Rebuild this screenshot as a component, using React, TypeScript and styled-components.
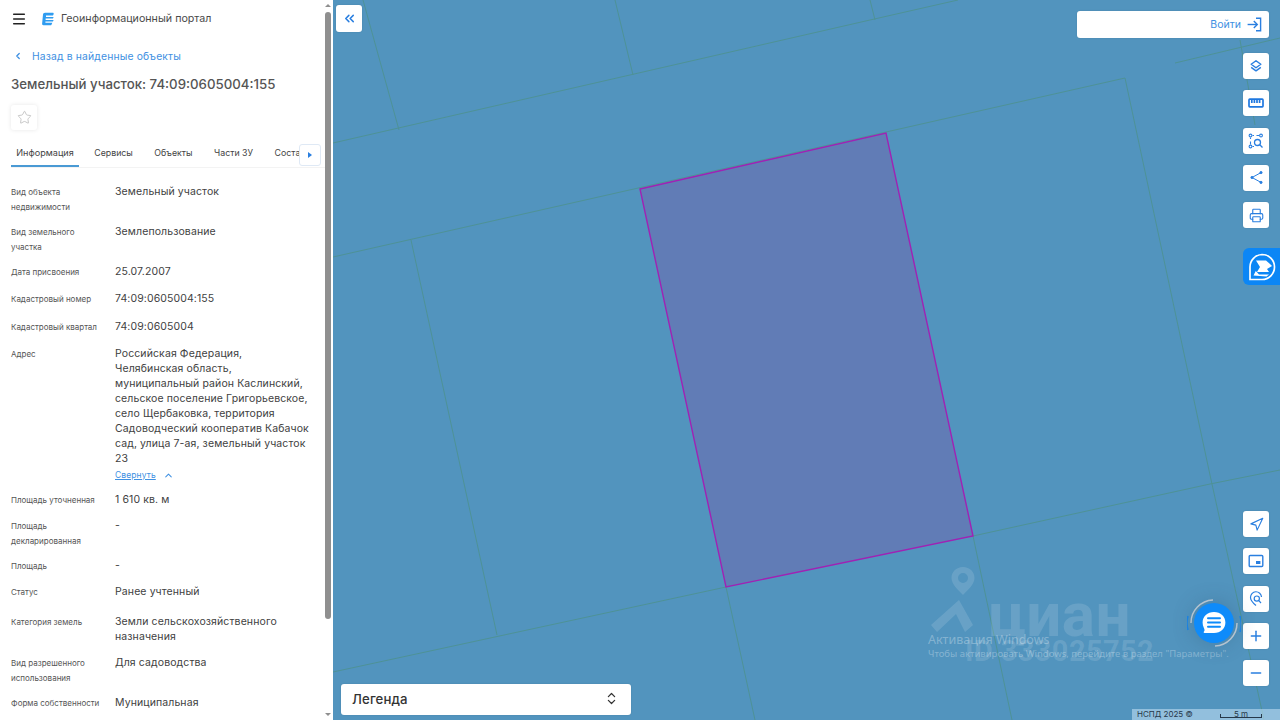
import React from "react";
import styled, { createGlobalStyle } from "styled-components";
import { Printer, Navigation, ChevronsLeft, Plus, Minus, Star, ChevronLeft, ChevronUp, ChevronsUpDown, Menu } from "lucide-react";

const Global = createGlobalStyle`
  html, body { margin: 0; padding: 0; width: 1280px; height: 720px; overflow: hidden; }
  body { font-family: Inter, "Noto Sans", sans-serif; background: #5294be; }
  #root { width: 1280px; height: 720px; }
`;

const Page = styled.div`display: flex; width: 1280px; height: 720px; overflow: hidden;`;
const Panel = styled.aside`position: relative; flex: 0 0 333px; height: 720px; background: #fff; overflow: hidden; color: #3c3c3c;`;
const Header = styled.header`display: flex; align-items: center; height: 37px; padding-left: 11px;`;
const Burger = styled.span`display: flex; width: 16px; color: #222; margin-right: 15px;`;
const BrandName = styled.span`font-size: 10.7px; color: #4a4a4a; margin-left: 7px;`;
const BackLink = styled.div`display: flex; align-items: center; gap: 9px; height: 16px; margin: 11px 0 0 13px; color: #3e90e2; font-size: 10.35px; letter-spacing: 0.015em;`;
const Title = styled.h1`margin: 11px 0 0 11px; font-size: 13.25px; line-height: 18px; font-weight: 500; color: #555;`;
const StarButton = styled.div`display: flex; align-items: center; justify-content: center; width: 26px; height: 25px; margin: 12px 0 0 11px; border-radius: 3px; box-shadow: 0 0 4px rgba(0,0,0,.1); color: #b5b5b5;`;
const Tabs = styled.nav`display: flex; width: 314px; height: 27px; margin: 10px 0 0 11px; overflow: hidden; border-bottom: 1px solid #f3f3f3; box-sizing: content-box;`;
const Tab = styled.div<{ $active?: boolean; $first?: boolean }>`
  flex: none; padding: 0 ${p => (p.$active ? "5.25px" : "10.75px")}; font-size: ${p => (p.$active ? "9.1px" : "8.8px")}; line-height: 25px; color: #444;
  border-bottom: 2px solid ${p => (p.$active ? "#4a9ad4" : "transparent")};
  height: 27px; box-sizing: border-box; margin-left: ${p => (p.$first ? "4.5px" : "0")};
`;
const TabArrow = styled.div`position: absolute; left: 299px; top: 144px; width: 22px; height: 22px; background: #fff; border: 1px solid #dfe9f5; border-radius: 3px; box-sizing: border-box; display: flex; align-items: center; justify-content: center;`;
const Rows = styled.div`margin: 16.5px 0 0 11px; width: 300px;`;
const Row = styled.div<{ $after?: number }>`display: grid; grid-template-columns: 104px 1fr; margin-bottom: ${p => p.$after ?? 10}px; min-height: 17.5px;`;
const Label = styled.div`font-size: 8px; line-height: 15px; color: #555; max-width: 92px;`;
const Value = styled.div`font-size: 10.5px; line-height: 15px; color: #414141; letter-spacing: 0.01em; margin-top: -1px;`;
const Collapse = styled.div`display: flex; align-items: center; gap: 7px; height: 16px; margin-top: 1px; font-size: 8.5px; color: #3e90e2;`;
const CollapseText = styled.span`text-decoration: underline;`;
const ScrollThumb = styled.div`position: absolute; left: 325px; top: 12px; width: 6px; height: 607px; background: #8f8f8f; border-radius: 3px;`;
const ScrollArrow = styled.div<{ $down?: boolean }>`
  position: absolute; left: 325px; ${p => (p.$down ? "bottom: 4px;" : "top: 4px;")} width: 0; height: 0;
  border-left: 3px solid transparent; border-right: 3px solid transparent;
  ${p => (p.$down ? "border-top: 3px solid #8f8f8f;" : "border-bottom: 3px solid #8f8f8f;")}
`;
const MapArea = styled.main`position: relative; flex: 1; height: 720px; background: #5294be; overflow: hidden;`;
const MapDrawing = styled.svg`position: absolute; left: 0; top: 0;`;
const Card = styled.div`background: #fff; border-radius: 3px; display: flex; align-items: center; box-shadow: 0 0 2px rgba(0,0,0,.12);`;
const CollapseButton = styled(Card)`position: absolute; left: 3px; top: 5px; width: 26px; height: 27px; justify-content: center; color: #2a7fe0;`;
const Login = styled(Card)`position: absolute; right: 11px; top: 11px; width: 192px; height: 27px; justify-content: flex-end; gap: 6px; padding: 0 7px 1px 0; box-sizing: border-box; color: #3e90e2; font-size: 10.5px;`;
const ToolColumn = styled.div`position: absolute; right: 11px; display: flex; flex-direction: column; gap: 11.25px;`;
const TopTools = styled(ToolColumn)`top: 53px;`;
const BottomTools = styled(ToolColumn)`top: 511px;`;
const Tool = styled(Card)`width: 26px; height: 26px; justify-content: center; color: #2a7fe0;`;
const Badge = styled.div`position: absolute; right: 0; top: 248px; width: 37px; height: 37px; background: #0c86f5; border-radius: 6px 0 0 6px; display: flex; align-items: center; justify-content: center;`;
const Chat = styled.div`position: absolute; left: 854px; top: 596px; width: 54px; height: 54px;`;
const ChatRing = styled.svg`position: absolute; left: 0; top: 0;`;
const ChatCore = styled.div`position: absolute; left: 7px; top: 7px; width: 40px; height: 40px; border-radius: 50%; background: #0e8bfa; box-shadow: 0 0 22px rgba(40,70,100,.3); display: flex; align-items: center; justify-content: center;`;
const Legend = styled(Card)`position: absolute; left: 8px; top: 684px; width: 290px; height: 31px; justify-content: space-between; padding: 0 12px 2px 11px; box-sizing: border-box; font-size: 13.2px; font-weight: 500; color: #333; letter-spacing: .01em;`;
const Attribution = styled.div`position: absolute; right: 0; bottom: 0; width: 148px; height: 11px; background: rgba(190,220,242,.6); font-size: 8px; line-height: 11px; color: #26384a; display: flex; padding-left: 5px; box-sizing: border-box;`;
const ScaleLabel = styled.div`position: absolute; left: 88px; top: 0; width: 42px; height: 8px; text-align: center; border-bottom: 1px solid #26384a; line-height: 10px; &::before, &::after { content: ""; position: absolute; bottom: 0; width: 1px; height: 3px; background: #26384a; } &::before { left: 0; } &::after { right: 0; }`;
const Watermark = styled.div`position: absolute; left: 595px; top: 565px; color: rgba(255,255,255,.13); pointer-events: none;`;
const WatermarkMark = styled.svg`display: block;`;
const CianWord = styled.div`position: absolute; left: 60px; top: 15px; font: 700 62px/70px Roboto, sans-serif; letter-spacing: .5px;`;
const CianId = styled.div`position: absolute; left: 37px; top: 68px; font: 700 29px/36px Roboto, sans-serif; white-space: nowrap; letter-spacing: .4px;`;
const Activation = styled.div`position: absolute; left: 595px; top: 632px; color: rgba(255,255,255,.3); white-space: nowrap; font-family: "Noto Sans", sans-serif;`;
const ActivationTitle = styled.div`font-size: 12.5px; line-height: 15px;`;
const ActivationHint = styled.div`font-size: 9.5px; line-height: 14px;`;

const Logo = () => (
  <svg width="12" height="14" viewBox="0 0 12 14">
    <path d="M3 .8 H10.5 C11.6 .8 12 1.5 11.6 2.3 L11 3.4 H4 V5 H11.6 L11 6.6 H3.6 V8 H11.6 L11 9.5 H3.4 V10.8 H10.3 L9.6 12.4 C9.3 13 9 13.2 8.4 13.2 H1.4 C.5 13.2 0 12.6 .1 11.8 L1 2.6 C1.1 1.6 1.9 .8 3 .8Z" fill="#2f9cf0" />
  </svg>
);
const LoginIcon = () => (
  <svg width="15" height="15" viewBox="0 0 15 15" fill="none" stroke="#2a7fe0" strokeWidth="1.4">
    <path d="M9 1.2 H13.6 V13.8 H9" /><path d="M.6 7.5 H10" /><path d="M6.8 4 L10.3 7.5 L6.8 11" />
  </svg>
);
const LayersIcon = () => (
  <svg width="14" height="14" viewBox="0 0 16 16" fill="none" stroke="#2a7fe0" strokeWidth="1.7" strokeLinejoin="round">
    <path d="M8 2 L13.5 6 L8 10 L2.5 6 Z" /><path d="M2.5 9.5 L8 13.5 L13.5 9.5" />
  </svg>
);
const RulerIcon = () => (
  <svg width="16" height="16" viewBox="0 0 16 16" fill="none" stroke="#1f78e0" strokeWidth="1.7">
    <rect x="1" y="4.2" width="14" height="7.6" rx=".8" /><path d="M3.8 4.5 V8 M6.4 4.5 V8 M9 4.5 V8 M11.6 4.5 V8" />
  </svg>
);
const AreaSearchIcon = () => (
  <svg width="16" height="16" viewBox="0 0 16 16" fill="none" stroke="#2a7fe0" strokeWidth="1.1">
    <circle cx="2.5" cy="2.5" r="1.4" /><circle cx="13" cy="2.5" r="1.4" /><circle cx="2.5" cy="13.5" r="1.4" />
    <path d="M4.5 2.5 H6 M8.5 2.5 H11 M2.5 4.5 V6 M2.5 8.5 V11.5 M4.5 13.5 H6" />
    <circle cx="9.5" cy="9.5" r="3" strokeWidth="1.3" /><path d="M11.8 11.8 L14.5 14.5" strokeWidth="1.3" />
  </svg>
);
const ShareIcon = () => (
  <svg width="15" height="15" viewBox="0 0 15 15" fill="#2a7fe0" stroke="#2a7fe0" strokeWidth="1">
    <circle cx="12" cy="2.6" r="1.1" /><circle cx="3" cy="7.5" r="1.1" /><circle cx="12" cy="12.4" r="1.1" />
    <path d="M3 7.5 L12 2.6 M3 7.5 L12 12.4" fill="none" />
  </svg>
);
const ViewIcon = () => (
  <svg width="16" height="16" viewBox="0 0 16 16" fill="none" stroke="#2a7fe0" strokeWidth="1.4">
    <rect x="1.2" y="2.5" width="13.6" height="11" rx="1" /><rect x="8" y="8" width="4.4" height="3" fill="#2a7fe0" stroke="none" />
  </svg>
);
const GeoSearchIcon = () => (
  <svg width="14" height="16" viewBox="0 0 14 16" fill="none" stroke="#2a7fe0" strokeWidth="1.2">
    <path d="M7 14.5 C4 12 1.5 9.5 1.5 6.5 A5.5 5.5 0 0 1 12.5 6" /><circle cx="7.8" cy="7.6" r="2.6" /><path d="M9.8 9.6 L12 12" />
  </svg>
);
const BadgeIcon = () => (
  <svg width="28" height="28" viewBox="0 0 28 28" fill="none">
    <path d="M14 1.5 A12.5 12.5 0 1 1 14 26.5 H2 V14 A12.5 12.5 0 0 1 14 1.5 Z" stroke="#fff" strokeWidth="1.7" />
    <path d="M8 7.5 L18 7.5 L22 11 L24 13 L19 16 L21 19 L9 19 L12 14 L8 7.5 Z" fill="#fff" />
    <path d="M5.5 22.5 L7.8 18 L11 21.5 H21 L18.5 23.5 Z" fill="#fff" />
  </svg>
);
const ChatIcon = () => (
  <svg width="24" height="24" viewBox="0 0 24 24">
    <path d="M12 1 C18.6 1 23.4 5.4 23.4 11.5 C23.4 17.6 18.6 22 12 22 H2.5 C1.6 22 1.4 21.2 2 20.6 C3 19.6 2.4 18.2 1.8 16.8 C1 15.2 .6 13.5 .6 11.5 C.6 5.4 5.4 1 12 1 Z" fill="#fff" />
    <path d="M6 7.2 H18 M6 11.5 H18 M6 15.8 H18" stroke="#0e8bfa" strokeWidth="2" strokeLinecap="round" />
  </svg>
);

const lines = [
  "0,143 537,20 625,0", "0,257 792,78 877,475 931,720", "640,536 877,484 947,470", "0,672 393,587 422,720", "640,536 679,720",
  "78,240 164,635", "282,0 300,75", "537,0 542,20", "30,0 66,130", "842,63 947,38", "907,40 922,125",
];

const details: [string, React.ReactNode, number?][] = [
  ["Вид объекта недвижимости", "Земельный участок"],
  ["Вид земельного участка", "Землепользование"],
  ["Дата присвоения", "25.07.2007"],
  ["Кадастровый номер", "74:09:0605004:155"],
  ["Кадастровый квартал", "74:09:0605004"],
];
const detailsAfter: [string, React.ReactNode, number?][] = [
  ["Площадь уточненная", "1 610 кв. м", 8.5],
  ["Площадь декларированная", "-"],
  ["Площадь", "-", 8],
  ["Статус", "Ранее учтенный", 12.5],
  ["Категория земель", "Земли сельскохозяйственного назначения", 12],
  ["Вид разрешенного использования", "Для садоводства"],
  ["Форма собственности", "Муниципальная"],
];
const address = [
  "Российская Федерация,", "Челябинская область,", "муниципальный район Каслинский,", "сельское поселение Григорьевское,",
  "село Щербаковка, территория", "Садоводческий кооператив Кабачок", "сад, улица 7-ая, земельный участок", "23",
];

export default function App() {
  const renderRow = ([l, v, after]: [string, React.ReactNode, number?]) => (
    <Row key={l} $after={after}><Label>{l}</Label><Value>{v}</Value></Row>
  );
  return (
    <Page>
      <Global />
      <Panel>
        <Header>
          <Burger><Menu size={16} strokeWidth={2.2} /></Burger>
          <Logo />
          <BrandName>Геоинформационный портал</BrandName>
        </Header>
        <BackLink><ChevronLeft size={10} strokeWidth={3} />Назад в найденные объекты</BackLink>
        <Title>Земельный участок: 74:09:0605004:155</Title>
        <StarButton><Star size={15} strokeWidth={1.2} /></StarButton>
        <Tabs>
          <Tab $active>Информация</Tab>
          <Tab $first>Сервисы</Tab>
          <Tab>Объекты</Tab>
          <Tab>Части ЗУ</Tab>
          <Tab>Состав</Tab>
          <Tab>Права</Tab>
        </Tabs>
        <TabArrow><svg width="4" height="6" viewBox="0 0 4 6"><path d="M0 0 L4 3 L0 6 Z" fill="#2a7fe0" /></svg></TabArrow>
        <Rows>
          {details.map(renderRow)}
          <Row $after={10}>
            <Label>Адрес</Label>
            <Value>
              {address.map(line => <div key={line}>{line}</div>)}
              <Collapse><CollapseText>Свернуть</CollapseText><ChevronUp size={11} strokeWidth={2.2} /></Collapse>
            </Value>
          </Row>
          {detailsAfter.map(renderRow)}
        </Rows>
        <ScrollArrow />
        <ScrollThumb />
        <ScrollArrow $down />
      </Panel>
      <MapArea>
        <MapDrawing width="947" height="720" viewBox="0 0 947 720" fill="none">
          {lines.map(p => <polyline key={p} points={p} stroke="#4e9296" strokeWidth="1" />)}
          <polygon points="307,189 553,133 640,536 393,587" fill="#617cb6" stroke="#a022b4" strokeWidth="1.4" />
        </MapDrawing>
        <Watermark>
          <WatermarkMark width="60" height="70" viewBox="0 0 60 70" fill="currentColor">
            <path fillRule="evenodd" d="M35 2 C42 2 46.5 7 46.5 13 C46.5 19 40 25 35 30 C30 25 23.5 19 23.5 13 C23.5 7 28 2 35 2 Z M35 8 A5 5 0 1 0 35 18 A5 5 0 1 0 35 8 Z" />
            <path d="M3 60 L31 35 L45 60 L37 67 L28 49 L9 67 Z" />
          </WatermarkMark>
          <CianWord>циан</CianWord>
          <CianId>ID 333025752</CianId>
        </Watermark>
        <Activation>
          <ActivationTitle>Активация Windows</ActivationTitle>
          <ActivationHint>Чтобы активировать Windows, перейдите в раздел "Параметры".</ActivationHint>
        </Activation>
        <CollapseButton><ChevronsLeft size={15} strokeWidth={2.4} /></CollapseButton>
        <Login>Войти<LoginIcon /></Login>
        <TopTools>
          <Tool><LayersIcon /></Tool>
          <Tool><RulerIcon /></Tool>
          <Tool><AreaSearchIcon /></Tool>
          <Tool><ShareIcon /></Tool>
          <Tool><Printer size={15} strokeWidth={1.8} /></Tool>
        </TopTools>
        <Badge><BadgeIcon /></Badge>
        <BottomTools>
          <Tool><Navigation size={15} strokeWidth={1.8} /></Tool>
          <Tool><ViewIcon /></Tool>
          <Tool><GeoSearchIcon /></Tool>
          <Tool><Plus size={16} strokeWidth={2.2} /></Tool>
          <Tool><Minus size={16} strokeWidth={2.2} /></Tool>
        </BottomTools>
        <Chat>
          <ChatRing width="54" height="54" viewBox="0 0 54 54" fill="none">
            <path d="M4 27 A23 23 0 0 1 26 4" stroke="#c2d0db" strokeWidth="1.5" />
            <path d="M50 27 A23 23 0 0 1 28 50" stroke="#c2d0db" strokeWidth="1.5" />
            <path d="M1 34 A27 27 0 0 1 1 20" stroke="#1b86ea" strokeWidth="1.5" />
            <path d="M53 20 A27 27 0 0 1 53 36" stroke="#1b86ea" strokeWidth="1.5" />
          </ChatRing>
          <ChatCore><ChatIcon /></ChatCore>
        </Chat>
        <Legend>Легенда<ChevronsUpDown size={15} strokeWidth={2} /></Legend>
        <Attribution>НСПД 2025 ©<ScaleLabel>5 m</ScaleLabel></Attribution>
      </MapArea>
    </Page>
  );
}
